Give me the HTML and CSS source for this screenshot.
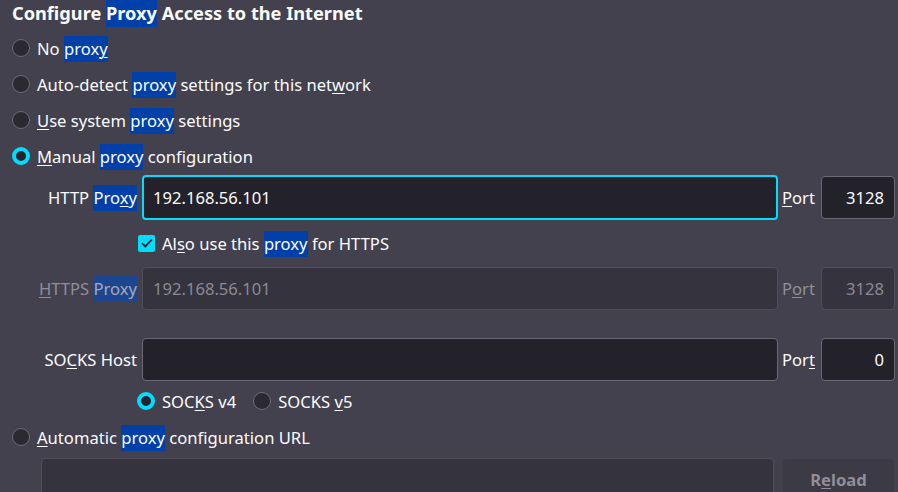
FILE: index.html
```html
<!DOCTYPE html>
<html>
<head>
<meta charset="utf-8">
<link rel="stylesheet" href="styles.css">
</head>
<body>
<div class="page">
  <div class="title">Configure <span class="hl">Proxy</span> Access to the Internet</div>

  <div class="radio-row"><span class="radio"></span><span>No <span class="hl">prox<u>y</u></span></span></div>
  <div class="radio-row"><span class="radio"></span><span>Auto-detect <span class="hl">proxy</span> settings for this net<u>w</u>ork</span></div>
  <div class="radio-row"><span class="radio"></span><span><u>U</u>se system <span class="hl">proxy</span> settings</span></div>
  <div class="radio-row"><span class="radio on"></span><span><u>M</u>anual <span class="hl">proxy</span> configuration</span></div>

  <div class="field-row first">
    <label class="flabel">HTTP <span class="hl">Pro<u>x</u>y</span></label>
    <div class="input focus">192.168.56.101</div>
    <label class="plabel"><u>P</u>ort</label>
    <div class="port">3128</div>
  </div>

  <div class="check-row"><span class="checkbox"><svg width="12" height="10" viewBox="0 0 12 10"><path d="M1 5.2 L4.3 8.4 L11 1.4" fill="none" stroke="#23222b" stroke-width="1.8"/></svg></span><span>Al<u>s</u>o use this <span class="hl">proxy</span> for HTTPS</span></div>

  <div class="field-row disabled">
    <label class="flabel"><u>H</u>TTPS <span class="hl dim">Proxy</span></label>
    <div class="input">192.168.56.101</div>
    <label class="plabel">P<u>o</u>rt</label>
    <div class="port">3128</div>
  </div>

  <div class="field-row socks">
    <label class="flabel">SO<u>C</u>KS Host</label>
    <div class="input"></div>
    <label class="plabel">Por<u>t</u></label>
    <div class="port">0</div>
  </div>

  <div class="socks-row">
    <span class="radio on"></span><span class="opt">SOC<u>K</u>S v4</span>
    <span class="radio"></span><span>SOCKS <u>v</u>5</span>
  </div>

  <div class="radio-row auto"><span class="radio"></span><span><u>A</u>utomatic <span class="hl">proxy</span> configuration URL</span></div>

  <div class="url-row">
    <div class="url-input"></div>
    <div class="reload">R<u>e</u>load</div>
  </div>
</div>
</body>
</html>
```
FILE: styles.css
```css
html, body {
  margin: 0;
  padding: 0;
  background: #42414d;
  overflow: hidden;
}
body {
  width: 898px;
  height: 492px;
  font-family: "Noto Sans", "Open Sans", sans-serif;
  font-size: 16.6px;
  color: #fbfbfe;
}
u {
  text-decoration: underline;
  text-decoration-thickness: 1px;
  text-underline-offset: 2px;
}
.hl {
  background: #0040a8;
  color: #fbfbfe;
  padding: 1px 0 2px;
}
.hl.dim {
  background: #1c4690;
  color: #a9a9b3;
}
.title {
  font-weight: bold;
  font-size: 18.2px;
  height: 30px;
  line-height: 26px;
  padding-left: 12px;
}
.radio-row {
  height: 36px;
  display: flex;
  align-items: center;
  padding-left: 12px;
}
.radio {
  box-sizing: border-box;
  width: 18px;
  height: 18px;
  border-radius: 50%;
  background: #2b2a33;
  border: 1px solid #6d6c76;
  margin-right: 7px;
  flex: none;
}
.radio.on {
  background: #23222b;
  border: 4px solid #00ddff;
}
.field-row {
  display: flex;
  align-items: center;
  height: 44px;
}
.field-row.first { margin-top: 1px; }
.field-row.socks { margin-top: 27px; }
.flabel {
  width: 137px;
  text-align: right;
  flex: none;
  white-space: nowrap;
}
.input {
  box-sizing: border-box;
  width: 636px;
  height: 43px;
  margin-left: 5px;
  border: 1px solid #6b6a74;
  border-radius: 4px;
  background: #23222b;
  display: flex;
  align-items: center;
  padding-left: 10px;
  flex: none;
}
.input.focus {
  border: 2px solid #00ddff;
  height: 45px;
  padding-left: 9px;
}
.plabel {
  width: 34px;
  margin-left: 4px;
  flex: none;
}
.port {
  box-sizing: border-box;
  width: 74px;
  height: 43px;
  margin-left: 5px;
  border: 1px solid #6b6a74;
  border-radius: 4px;
  background: #23222b;
  display: flex;
  align-items: center;
  justify-content: flex-end;
  padding-right: 10px;
  flex: none;
}
.disabled { color: #8f8f9a; }
.disabled .input, .disabled .port {
  background: #35343e;
  border-color: #4f4e59;
  color: #8a8994;
}
.check-row {
  height: 46px;
  display: flex;
  align-items: center;
  padding-left: 138px;
  margin-top: 1px;
}
.checkbox {
  box-sizing: border-box;
  width: 17px;
  height: 17px;
  border-radius: 2px;
  background: #00ddff;
  display: flex;
  align-items: center;
  justify-content: center;
  margin-right: 7px;
}
.socks-row {
  height: 40px;
  display: flex;
  align-items: center;
  padding-left: 137px;
}
.socks-row .opt { margin-right: 17px; }
.radio-row.auto { height: 32px; }
.url-row {
  display: flex;
  margin-top: 5px;
  padding-left: 41px;
}
.url-input {
  box-sizing: border-box;
  width: 733px;
  height: 44px;
  background: #35343e;
  border: 1px solid #4f4e59;
  border-radius: 4px;
}
.reload {
  box-sizing: border-box;
  width: 111px;
  height: 44px;
  margin-left: 9px;
  margin-top: 1px;
  background: #3b3a45;
  border-radius: 4px;
  color: #8f8e99;
  font-weight: bold;
  text-align: center;
  padding-top: 9px;
}
```
